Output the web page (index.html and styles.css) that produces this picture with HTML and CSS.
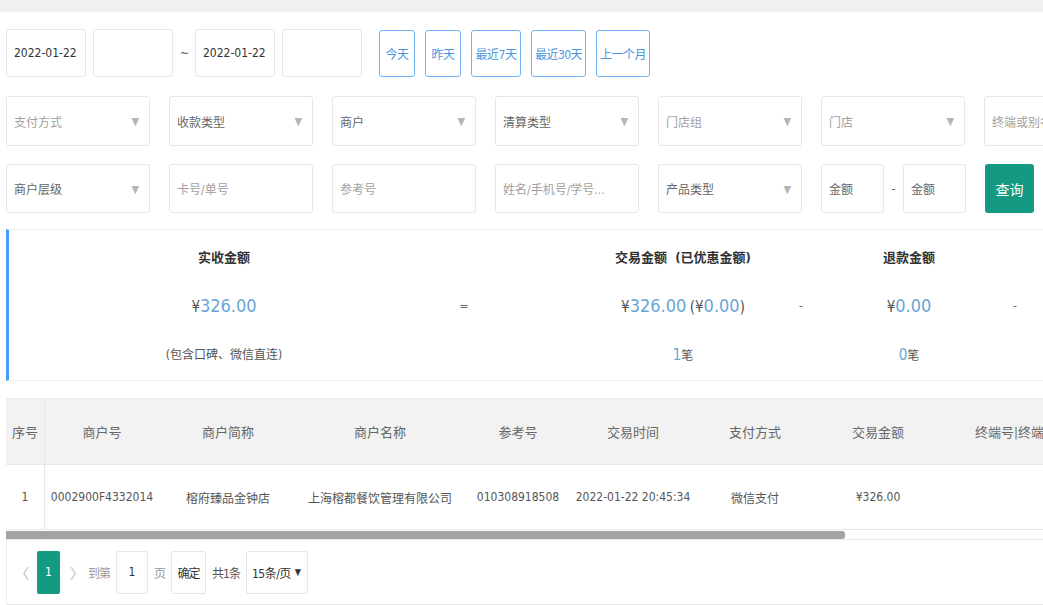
FILE: index.html
```html
<!DOCTYPE html>
<html lang="zh-CN">
<head>
    <meta charset="UTF-8">
    <title>交易流水</title>
    <link rel="stylesheet" href="styles.css">
</head>
<body>
    <div class="topbar"></div>
    <div class="page">
        <div class="filter-row row-date">
            <div class="field date">2022-01-22</div>
            <div class="field date"></div>
            <span class="sep">~</span>
            <div class="field date">2022-01-22</div>
            <div class="field date"></div>
            <div class="quick">
                <button class="btn-quick w36">今天</button>
                <button class="btn-quick w36">昨天</button>
                <button class="btn-quick w50">最近7天</button>
                <button class="btn-quick w55">最近30天</button>
                <button class="btn-quick w54">上一个月</button>
            </div>
        </div>

        <div class="filter-row row-select">
            <div class="field select light">支付方式<i class="caret">▼</i></div>
            <div class="field select">收款类型<i class="caret">▼</i></div>
            <div class="field select">商户<i class="caret">▼</i></div>
            <div class="field select">清算类型<i class="caret">▼</i></div>
            <div class="field select light">门店组<i class="caret">▼</i></div>
            <div class="field select light">门店<i class="caret">▼</i></div>
            <div class="field select light">终端或别名</div>
        </div>

        <div class="filter-row row-select2">
            <div class="field select">商户层级<i class="caret">▼</i></div>
            <div class="field select light">卡号/单号</div>
            <div class="field select light">参考号</div>
            <div class="field select light">姓名/手机号/学号...</div>
            <div class="field select">产品类型<i class="caret">▼</i></div>
            <div class="amount-range">
                <div class="field amount">金额</div>
                <span class="dash">-</span>
                <div class="field amount">金额</div>
            </div>
            <button class="btn-search">查询</button>
        </div>

        <div class="summary">
            <div class="sum-col col-real">
                <div class="sum-title">实收金额</div>
                <div class="sum-value"><span class="yen">¥</span><span class="num">326.00</span></div>
                <div class="sum-sub">(包含口碑、微信直连)</div>
            </div>
            <div class="sum-op col-eq">=</div>
            <div class="sum-col col-trade">
                <div class="sum-title">交易金额&nbsp; (已优惠金额)</div>
                <div class="sum-value"><span class="yen">¥</span><span class="num">326.00</span>&nbsp;<span class="yen">(¥</span><span class="num">0.00</span><span class="yen">)</span></div>
                <div class="sum-sub"><span class="num">1</span>笔</div>
            </div>
            <div class="sum-op col-minus">-</div>
            <div class="sum-col col-refund">
                <div class="sum-title">退款金额</div>
                <div class="sum-value"><span class="yen">¥</span><span class="num">0.00</span></div>
                <div class="sum-sub"><span class="num">0</span>笔</div>
            </div>
            <div class="sum-op col-minus2">-</div>
        </div>

        <div class="table-wrap">
            <table class="grid">
                <thead>
                    <tr>
                        <th class="c-idx">序号</th>
                        <th class="c-mno">商户号</th>
                        <th class="c-short">商户简称</th>
                        <th class="c-name">商户名称</th>
                        <th class="c-ref">参考号</th>
                        <th class="c-time">交易时间</th>
                        <th class="c-pay">支付方式</th>
                        <th class="c-amt">交易金额</th>
                        <th class="c-term">终端号|终端别名</th>
                    </tr>
                </thead>
                <tbody>
                    <tr>
                        <td class="c-idx">1</td>
                        <td>0002900F4332014</td>
                        <td>榕府臻品金钟店</td>
                        <td>上海榕都餐饮管理有限公司</td>
                        <td>010308918508</td>
                        <td>2022-01-22 20:45:34</td>
                        <td>微信支付</td>
                        <td>¥326.00</td>
                        <td></td>
                    </tr>
                </tbody>
            </table>
            <div class="hscroll"><div class="hscroll-thumb"></div></div>
        </div>

        <div class="pager">
            <span class="pg-arrow">〈</span>
            <span class="pg-cur">1</span>
            <span class="pg-arrow">〉</span>
            <span class="pg-text">到第</span>
            <div class="pg-input">1</div>
            <span class="pg-text">页</span>
            <button class="pg-ok">确定</button>
            <span class="pg-text dark">共1条</span>
            <div class="pg-size">15条/页<i>▼</i></div>
        </div>
    </div>
</body>
</html>
```

FILE: styles.css
```css
html, body {
    margin: 0;
    overflow: hidden;
}
body {
    font-family: "DejaVu Sans", "Noto Sans CJK SC", sans-serif;
    font-stretch: condensed;
    font-size: 12px;
    color: #555;
    background: #fff;
    width: 1043px;
    height: 605px;
}
.topbar {
    height: 12px;
    background: #f0f0f0;
}
.page {
    padding-left: 6px;
}
.filter-row {
    display: flex;
    align-items: center;
    white-space: nowrap;
}
.field {
    box-sizing: border-box;
    border: 1px solid #e6e6e6;
    border-radius: 3px;
    background: #fff;
    display: flex;
    align-items: center;
    padding-left: 7px;
    flex: none;
}
.row-date {
    margin-top: 17px;
    height: 48px;
    gap: 7px;
}
.field.date {
    width: 80px;
    height: 48px;
    color: #333;
}
.sep {
    width: 8px;
    color: #555;
    text-align: center;
}
.quick {
    display: flex;
    gap: 10px;
    margin-left: 10px;
}
.btn-quick {
    height: 47px;
    border: 1px solid #6fb3f2;
    border-radius: 3px;
    background: #fff;
    color: #4b95df;
    font: inherit;
    padding: 0;
    letter-spacing: -0.5px;
}
.w36 { width: 36px; }
.w50 { width: 50px; }
.w55 { width: 55px; }
.w54 { width: 54px; }

.row-select {
    margin-top: 19px;
    gap: 19px;
}
.row-select2 {
    margin-top: 18px;
    gap: 19px;
}
.row-select .field {
    height: 50px;
}
.row-select2 .field {
    height: 49px;
}
.field.select {
    width: 144px;
    position: relative;
    color: #666;
}
.field.light {
    color: #a0a0a0;
}
.caret {
    position: absolute;
    right: 10px;
    top: 18px;
    font-style: normal;
    font-size: 11px;
    color: #b5b5b5;
}
.amount-range {
    display: flex;
    align-items: center;
}
.field.amount {
    width: 63px;
    color: #666;
}
.dash {
    width: 19px;
    text-align: center;
    color: #555;
}
.btn-search {
    width: 49px;
    height: 49px;
    background: #139a80;
    color: #fff;
    border: none;
    border-radius: 3px;
    font: inherit;
    font-size: 14px;
}

.summary {
    margin-top: 16px;
    display: flex;
    border-top: 1px solid #efefef;
    border-bottom: 1px solid #efefef;
    border-left: 3px solid #4a9ff5;
    height: 152px;
    box-sizing: border-box;
    padding-top: 4px;
}
.sum-col {
    text-align: center;
    flex: none;
}
.sum-title,
.sum-value {
    height: 48px;
    line-height: 48px;
}
.sum-sub {
    height: 50px;
    line-height: 50px;
}
.sum-title {
    color: #333;
    font-size: 13px;
    font-weight: bold;
}
.sum-value .num {
    font-size: 18px;
    color: #6aa5d6;
}
.sum-value .yen {
    font-size: 15px;
    color: #555;
}
.sum-sub .num {
    font-size: 15px;
    color: #6aa5d6;
}
.sum-op {
    flex: none;
    text-align: center;
    margin-top: 48px;
    height: 48px;
    line-height: 48px;
    color: #666;
}
.col-real { width: 430px; }
.col-eq { width: 50px; margin-right: 94px; }
.col-trade { width: 200px; }
.col-minus { width: 36px; }
.col-refund { width: 180px; }
.col-minus2 { width: 32px; }

.table-wrap {
    margin-top: 17px;
    width: 1100px;
}
.grid {
    border-collapse: collapse;
    table-layout: fixed;
    width: 1100px;
}
.grid th,
.grid td {
    text-align: center;
    white-space: nowrap;
    overflow: hidden;
    padding: 0;
}
.grid th {
    background: #f2f2f2;
    height: 65px;
    font-weight: normal;
    color: #666;
    font-size: 13px;
    border-top: 1px solid #eaeaea;
}
.grid td {
    height: 64px;
    color: #555;
    border-top: 1px solid #e8e8e8;
    border-bottom: 1px solid #e8e8e8;
}
.grid .c-idx {
    border-right: 1px solid #e6e6e6;
}
.c-idx { width: 38px; }
.c-mno { width: 114px; }
.c-short { width: 138px; }
.c-name { width: 166px; }
.c-ref { width: 110px; }
.c-time { width: 120px; }
.c-pay { width: 124px; }
.c-amt { width: 122px; }
.c-term { width: 168px; text-align: left !important; padding-left: 36px !important; }
.hscroll {
    height: 10px;
    border-bottom: 1px solid #ececec;
    padding-top: 1px;
    box-sizing: border-box;
}
.hscroll-thumb {
    width: 839px;
    height: 8px;
    background: #a3a3a3;
    border-radius: 0 3px 3px 0;
}

.pager {
    display: flex;
    align-items: center;
    height: 65px;
    box-sizing: border-box;
    width: 1100px;
    border-left: 1px solid #eee;
    border-bottom: 1px solid #e6e6e6;
    padding-left: 8px;
    gap: 6px;
    white-space: nowrap;
}
.pg-arrow {
    color: #bbb;
    font-size: 14px;
    width: 12px;
    text-align: center;
}
.pg-cur {
    width: 23px;
    height: 43px;
    line-height: 43px;
    text-align: center;
    background: #139a80;
    color: #fff;
    border-radius: 2px;
    margin: 0 4px;
}
.pg-text {
    color: #999;
    letter-spacing: -1px;
}
.pg-text.dark {
    color: #555;
}
.pg-input {
    width: 30px;
    height: 41px;
    border: 1px solid #e6e6e6;
    border-radius: 2px;
    text-align: center;
    line-height: 41px;
    color: #333;
}
.pg-ok {
    width: 35px;
    height: 43px;
    border: 1px solid #e6e6e6;
    border-radius: 2px;
    background: #fff;
    font: inherit;
    color: #333;
    padding: 0;
    letter-spacing: -1px;
}
.pg-size {
    width: 62px;
    height: 43px;
    box-sizing: border-box;
    border: 1px solid #e6e6e6;
    border-radius: 2px;
    display: flex;
    align-items: center;
    padding-left: 5px;
    color: #333;
    gap: 4px;
    letter-spacing: -0.5px;
}
.pg-size i {
    font-style: normal;
    font-size: 9px;
}
```
